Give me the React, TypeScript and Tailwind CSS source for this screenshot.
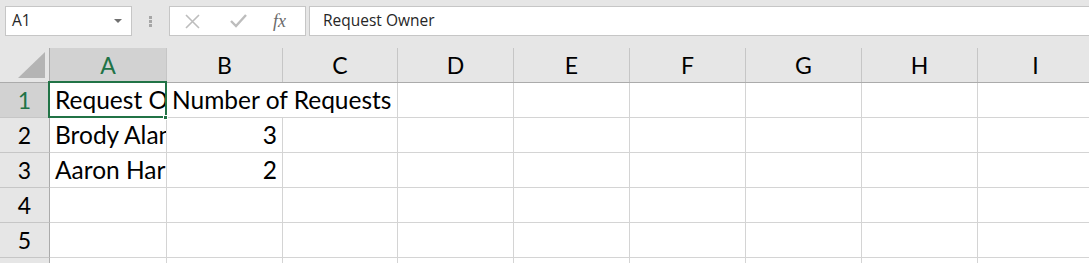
import React from "react";

const cols = [
  { label: "A", w: 117 },
  { label: "B", w: 116 },
  { label: "C", w: 115 },
  { label: "D", w: 116 },
  { label: "E", w: 116 },
  { label: "F", w: 116 },
  { label: "G", w: 116 },
  { label: "H", w: 116 },
  { label: "I", w: 116 },
];

const rows: Array<{ a?: string; b?: string }> = [
  { a: "Request Owner", b: "Number of Requests" },
  { a: "Brody Alan", b: "3" },
  { a: "Aaron Harris", b: "2" },
  {},
  {},
  {},
];

const cellFont = { fontFamily: "Lato, 'Noto Sans', sans-serif" };
const uiFont = { fontFamily: "'Open Sans', 'Noto Sans', sans-serif" };

export default function App() {
  return (
    <div className="w-[1089px] h-[263px] overflow-hidden bg-[#e6e6e6] relative">
      {/* formula bar */}
      <div className="h-[48px] flex items-start pt-[6px] pl-[5px]">
        <div
          className="w-[127px] h-[30px] bg-white border border-[#c6c6c6] flex items-center justify-between pl-[6px] pr-[9px] text-[15.5px] text-[#262626]"
          style={uiFont}
        >
          <span>A1</span>
          <span className="w-0 h-0 border-l-[4px] border-r-[4px] border-t-[4px] border-l-transparent border-r-transparent border-t-[#707070]" />
        </div>
        <div className="w-[37px] h-[30px] flex flex-col items-center justify-center gap-[1px]">
          <span className="w-[3px] h-[3px] bg-[#a6a6a6]" />
          <span className="w-[3px] h-[3px] bg-[#a6a6a6]" />
          <span className="w-[3px] h-[3px] bg-[#a6a6a6]" />
        </div>
        <div className="w-[137px] h-[30px] bg-white border border-[#c6c6c6] flex items-center">
          <svg className="ml-[15px]" width="15" height="15" viewBox="0 0 15 15">
            <path d="M1 1L14 14M14 1L1 14" stroke="#bdbdbd" strokeWidth="1.6" fill="none" />
          </svg>
          <svg className="ml-[30px]" width="17" height="14" viewBox="0 0 17 14">
            <path d="M1 7L6 12L16 1" stroke="#bdbdbd" strokeWidth="2.4" fill="none" />
          </svg>
          <span
            className="ml-[26px] text-[18px] italic text-[#6a6a6a] leading-none"
            style={{ fontFamily: "'Liberation Serif', 'DejaVu Serif', serif" }}
          >
            fx
          </span>
        </div>
        <div
          className="ml-[3px] flex-1 h-[30px] bg-white border border-[#c6c6c6] border-r-0 flex items-center pl-[13px] text-[15.5px] text-[#262626]"
          style={uiFont}
        >
          Request Owner
        </div>
      </div>

      {/* column headers */}
      <div className="flex h-[35px] border-b border-[#ababab]" style={cellFont}>
        <div className="w-[50px] shrink-0 border-r border-[#ababab] flex items-end justify-end pr-[4px] pb-[4px]">
          <svg width="27" height="26" viewBox="0 0 27 26">
            <path d="M27 0L27 26L0 26Z" fill="#b4b4b4" />
          </svg>
        </div>
        {cols.map((c, i) => (
          <div
            key={c.label}
            style={{ width: c.w }}
            className={
              "shrink-0 border-r border-[#c6c6c6] flex items-center justify-center text-[23px] " +
              (i === 0 ? "bg-[#d2d2d2] text-[#217346]" : "text-[#000]")
            }
          >
            {c.label}
          </div>
        ))}
      </div>

      {/* rows */}
      <div className="bg-white" style={cellFont}>
        {rows.map((r, ri) => (
          <div key={ri} className="flex h-[35px]">
            <div
              className={
                "w-[50px] shrink-0 border-r border-b border-r-[#ababab] border-b-[#c6c6c6] flex items-center justify-center text-[23px] " +
                (ri === 0 ? "bg-[#d2d2d2] text-[#217346]" : "bg-[#e6e6e6] text-[#000]")
              }
            >
              {ri + 1}
            </div>
            <div className="w-[117px] shrink-0 border-r border-b border-[#d4d4d4] flex items-center pl-[5px] overflow-hidden whitespace-nowrap text-[24.5px] text-black">
              {r.a}
            </div>
            {ri === 0 ? (
              <div className="w-[231px] shrink-0 border-r border-b border-[#d4d4d4] flex items-center pl-[5px] whitespace-nowrap text-[24.5px] text-black">
                {r.b}
              </div>
            ) : (
              <>
                <div className="w-[116px] shrink-0 border-r border-b border-[#d4d4d4] flex items-center justify-end pr-[5px] text-[24.5px] text-black">
                  {r.b}
                </div>
                <div className="w-[115px] shrink-0 border-r border-b border-[#d4d4d4]" />
              </>
            )}
            {cols.slice(3).map((c) => (
              <div key={c.label} style={{ width: c.w }} className="shrink-0 border-r border-b border-[#d4d4d4]" />
            ))}
          </div>
        ))}
      </div>

      {/* active cell outline */}
      <div className="absolute left-[48px] top-[81px] w-[119px] h-[37px] border-2 border-[#217346] pointer-events-none" />
      <div className="absolute left-[163px] top-[115px] w-[5px] h-[5px] bg-[#217346] border border-white pointer-events-none" />
    </div>
  );
}
